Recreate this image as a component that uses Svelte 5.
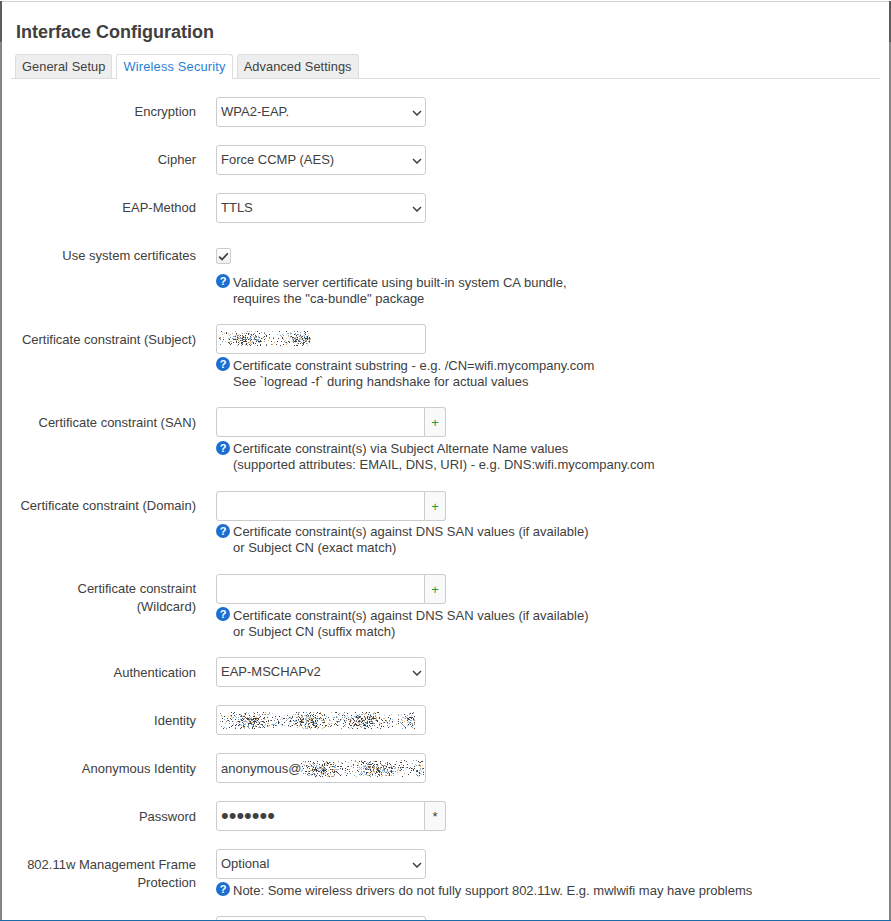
<script>
	// seeded so the smudged values come out the same on every run
	function noise(seed, width, height, density) {
		let s = seed;
		const next = () => {
			s = (s * 1664525 + 1013904223) % 4294967296;
			return s / 4294967296;
		};
		const colours = ['#3c3c50', '#5a4a3c', '#8a8a8a', '#6fb0e0', '#e0b070', '#b8c8d8', '#404040'];
		const dots = [];
		for (let x = 0; x < width; x++) {
			const band = 0.6 + 0.4 * Math.sin(x / 9 + seed);
			for (let y = 0; y < height; y++) {
				const mid = 1 - Math.abs(y - height / 2) / (height / 2);
				if (next() < density * band * (0.35 + mid)) {
					dots.push({ x, y, fill: colours[Math.floor(next() * colours.length)] });
				}
			}
		}
		return dots;
	}

	const tabs = [
		{ label: 'General Setup', active: false },
		{ label: 'Wireless Security', active: true },
		{ label: 'Advanced Settings', active: false }
	];

	const rows = [
		{ label: 'Encryption', kind: 'select', value: 'WPA2-EAP.' },
		{ label: 'Cipher', kind: 'select', value: 'Force CCMP (AES)' },
		{ label: 'EAP-Method', kind: 'select', value: 'TTLS' },
		{
			label: 'Use system certificates',
			kind: 'check',
			help: ['Validate server certificate using built-in system CA bundle,', 'requires the "ca-bundle" package']
		},
		{
			label: 'Certificate constraint (Subject)',
			kind: 'text',
			smudge: { seed: 11, width: 92, height: 15, x: 3 },
			help: ['Certificate constraint substring - e.g. /CN=wifi.mycompany.com', 'See `logread -f` during handshake for actual values']
		},
		{
			label: 'Certificate constraint (SAN)',
			kind: 'list',
			help: ['Certificate constraint(s) via Subject Alternate Name values', '(supported attributes: EMAIL, DNS, URI) - e.g. DNS:wifi.mycompany.com']
		},
		{
			label: 'Certificate constraint (Domain)',
			kind: 'list',
			help: ['Certificate constraint(s) against DNS SAN values (if available)', 'or Subject CN (exact match)']
		},
		{
			label: 'Certificate constraint (Wildcard)',
			kind: 'list',
			help: ['Certificate constraint(s) against DNS SAN values (if available)', 'or Subject CN (suffix match)']
		},
		{ label: 'Authentication', kind: 'select', value: 'EAP-MSCHAPv2' },
		{ label: 'Identity', kind: 'text', smudge: { seed: 23, width: 196, height: 17, x: 3 } },
		{ label: 'Anonymous Identity', kind: 'text', value: 'anonymous@', smudge: { seed: 37, width: 123, height: 17, x: 85 } },
		{ label: 'Password', kind: 'password', value: 'secret1' },
		{
			label: '802.11w Management Frame Protection',
			kind: 'select',
			value: 'Optional',
			help: ['Note: Some wireless drivers do not fully support 802.11w. E.g. mwlwifi may have problems']
		},
		{ label: '', kind: 'select', value: '' }
	];
</script>

{#snippet chevron()}
	<svg class="chevron" viewBox="0 0 10 6" aria-hidden="true">
		<path d="M1 1l4 4 4-4" fill="none" stroke="#404040" stroke-width="1.5" />
	</svg>
{/snippet}

{#snippet smudge(conf)}
	<svg class="smudge" style="left:{conf.x}px" width={conf.width} height={conf.height} aria-hidden="true">
		{#each noise(conf.seed, conf.width, conf.height, 0.5) as dot}
			<rect x={dot.x} y={dot.y} width="1" height="1" fill={dot.fill} />
		{/each}
	</svg>
{/snippet}

<div class="window">
	<div class="page">
		<h3>Interface Configuration</h3>
		<ul class="tabs">
			{#each tabs as tab}
				<li class:active={tab.active}>{tab.label}</li>
			{/each}
		</ul>

		{#each rows as row}
			<div class="row">
				<div class="label">{row.label}</div>
				<div class="field">
					{#if row.kind === 'select'}
						<div class="select">
							<select tabindex="-1">
								<option>{row.value}</option>
							</select>
							{@render chevron()}
						</div>
					{:else if row.kind === 'check'}
						<div class="checkline">
							<span class="checkbox">
								<svg viewBox="0 0 12 10" aria-hidden="true">
									<path d="M1.2 5.2l3.2 3.2 6.4-7" fill="none" stroke="#404040" stroke-width="2" />
								</svg>
							</span>
						</div>
					{:else if row.kind === 'text'}
						<div class="textbox">
							<input type="text" value={row.value ?? ''} tabindex="-1" />
							{@render smudge(row.smudge)}
						</div>
					{:else if row.kind === 'list'}
						<div class="group">
							<input type="text" tabindex="-1" />
							<span class="addon plus">+</span>
						</div>
					{:else if row.kind === 'password'}
						<div class="group">
							<input class="secret" type="password" value={row.value} tabindex="-1" />
							<span class="addon">*</span>
						</div>
					{/if}

					{#if row.help}
						<div class="help">
							<svg class="info" viewBox="0 0 14 14" aria-hidden="true">
								<circle cx="7" cy="7" r="7" fill="#1c6fd0" />
								<text x="7" y="11" text-anchor="middle">?</text>
							</svg>
							<div class="help-text">
								{#each row.help as line}
									<div>{line}</div>
								{/each}
							</div>
						</div>
					{/if}
				</div>
			</div>
		{/each}
	</div>
</div>

<style>
	:global(body) {
		background: #fff;
	}

	.window {
		height: 921px;
		box-sizing: border-box;
		overflow: hidden;
		padding: 1px 2px 0 2px;
		background: linear-gradient(#fff 0 1px, #5c5c5c 1px 42px, #858585 42px);
		border-bottom: 1px solid #1a6aa8;
		font-family: 'Liberation Sans', Arial, sans-serif;
		font-size: 13px;
		color: #404040;
	}

	.page {
		height: 919px;
		box-sizing: border-box;
		overflow: hidden;
		padding: 0 9px 0 9px;
		background: #fff;
		border-top: 1px solid #d4d4d4;
	}

	h3 {
		margin: 0;
		padding: 18px 0 0 5px;
		height: 34px;
		font-size: 18px;
		line-height: 24px;
		font-weight: bold;
		color: #404040;
	}

	.tabs {
		display: flex;
		gap: 4px;
		margin: 0 0 18px;
		padding: 0 0 0 4px;
		list-style: none;
		height: 24px;
		border-bottom: 1px solid #ddd;
		font-size: 12.8px;
		letter-spacing: 0.07px;
	}

	.tabs li {
		box-sizing: border-box;
		height: 24px;
		padding: 0 6px;
		line-height: 23px;
		background: #eee;
		border: 1px solid #ddd;
		border-bottom: none;
		border-radius: 3px 3px 0 0;
	}

	.tabs li.active {
		height: 25px;
		background: #fff;
		color: #2a7fd5;
		letter-spacing: 0.2px;
	}

	.row {
		display: flex;
		align-items: flex-start;
		gap: 20px;
		margin-bottom: 18px;
	}

	.label {
		flex: none;
		box-sizing: border-box;
		width: 185px;
		padding: 6.45px 0 0 8px;
		text-align: right;
		line-height: 18px;
	}

	.field {
		min-width: 0;
	}

	.select,
	.textbox {
		position: relative;
		width: 210px;
		height: 30px;
	}

	select,
	input {
		display: block;
		box-sizing: border-box;
		height: 30px;
		margin: 0;
		padding: 0 4px;
		font: inherit;
		color: inherit;
		background: #fff;
		border: 1px solid #ccc;
		border-radius: 3px;
		outline: none;
	}

	select {
		width: 100%;
		padding-bottom: 2px;
		appearance: none;
	}

	.textbox input {
		width: 100%;
	}

	.secret {
		font-size: 22px;
	}

	.chevron {
		position: absolute;
		top: 13px;
		right: 4px;
		width: 10px;
		height: 6px;
	}

	.smudge {
		position: absolute;
		top: 7px;
	}

	.checkline {
		height: 30px;
		padding-top: 7px;
		box-sizing: border-box;
	}

	.checkbox {
		display: flex;
		align-items: center;
		justify-content: center;
		box-sizing: border-box;
		width: 15px;
		height: 16px;
		border: 1px solid #ccc;
		border-radius: 2px;
		background: linear-gradient(#fff, #f0f0f0);
	}

	.checkbox svg {
		width: 11px;
		height: 9px;
	}

	.group {
		display: flex;
		width: 230px;
		height: 30px;
	}

	.group input {
		width: 209px;
		border-radius: 3px 0 0 3px;
	}

	.addon {
		box-sizing: border-box;
		width: 21px;
		height: 30px;
		line-height: 30px;
		text-align: center;
		background: #f9f9f9;
		border: 1px solid #ccc;
		border-left: none;
		border-radius: 0 3px 3px 0;
	}

	.plus {
		color: #1f9a3c;
	}

	.help {
		display: flex;
		gap: 3px;
		margin-top: 3.22px;
		line-height: 16px;
		white-space: nowrap;
	}

	.help-text {
		padding-top: 0.6px;
		margin-bottom: -0.6px;
	}

	.info {
		flex: none;
		width: 14px;
		height: 14px;
	}

	.info text {
		font-family: 'Liberation Sans', Arial, sans-serif;
		font-size: 11px;
		font-weight: bold;
		fill: #fff;
	}
</style>
